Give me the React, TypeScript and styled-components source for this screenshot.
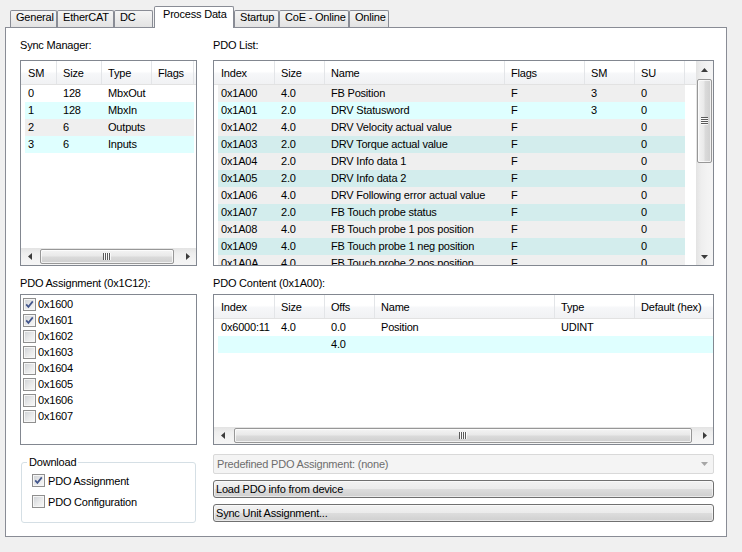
import React from "react";
import styled, { createGlobalStyle, css } from "styled-components";

const GlobalStyle = createGlobalStyle`
  * { box-sizing: border-box; }
  html, body { margin: 0; padding: 0; background: #f0f0f0; }
  body {
    width: 742px;
    height: 552px;
    overflow: hidden;
    font-family: "Liberation Sans", Arial, sans-serif;
    font-size: 11px;
    letter-spacing: -0.2px;
    color: #000;
  }
`;

const Window = styled.div`
  width: 742px;
  height: 552px;
  padding-top: 6px;
  background: #f0f0f0;
`;

const TabStrip = styled.div`
  display: flex;
  align-items: flex-end;
  height: 21px;
  padding-left: 10px;
`;

const Tab = styled.div<{ $active?: boolean; $w: number; $ml?: number }>`
  position: relative;
  flex: 0 0 ${(p) => p.$w}px;
  height: ${(p) => (p.$active ? 22 : 17)}px;
  margin-left: ${(p) => p.$ml ?? 0}px;
  margin-bottom: ${(p) => (p.$active ? -1 : 0)}px;
  z-index: ${(p) => (p.$active ? 1 : 0)};
  border: 1px solid #898c95;
  border-bottom: none;
  border-radius: 2px 2px 0 0;
  background: ${(p) =>
    p.$active ? "#ffffff" : "linear-gradient(#f5f5f5, #ececec 50%, #e3e3e3)"};
  padding: ${(p) => (p.$active ? "1px 0 0 8px" : "0 0 0 5px")};
  line-height: 13px;
  white-space: nowrap;
`;

const Panel = styled.div`
  margin-left: 5px;
  width: 722px;
  height: 510px;
  border: 1px solid #898c95;
  background: #ffffff;
  display: grid;
  grid-template-columns: 177px 501px;
  column-gap: 16px;
  align-items: start;
  padding: 11px 0 0 14px;
`;

const Column = styled.div`
  display: flex;
  flex-direction: column;
`;

const SectionLabel = styled.div<{ $mt?: number; $mb: number }>`
  height: 13px;
  line-height: 13px;
  margin-top: ${(p) => p.$mt ?? 0}px;
  margin-bottom: ${(p) => p.$mb}px;
  white-space: nowrap;
`;

const ListBox = styled.div<{ $h: number; $dir: "row" | "column" }>`
  height: ${(p) => p.$h}px;
  border: 1px solid #828790;
  background: #ffffff;
  display: flex;
  flex-direction: ${(p) => p.$dir};
  overflow: hidden;
`;

const ListArea = styled.div`
  flex: 1 1 auto;
  min-width: 0;
  min-height: 0;
  overflow: hidden;
`;

const HeaderRow = styled.div`
  display: flex;
  width: max-content;
  min-width: 100%;
  height: 24px;
  border-bottom: 1px solid #e2e2e2;
  background: linear-gradient(#ffffff 0%, #ffffff 45%, #f6f7f9 55%, #f1f2f4 100%);
`;

const HeaderCell = styled.div<{ $w: number; $first?: boolean }>`
  flex: 0 0 ${(p) => p.$w}px;
  padding: 1px 0 0 ${(p) => (p.$first ? 7 : 6)}px;
  border-right: 1px solid #e3e5e8;
  line-height: 22px;
  white-space: nowrap;
  overflow: hidden;
`;

const HeaderFill = styled.div`
  flex: 1 1 auto;
  min-width: 0;
`;

const DataRow = styled.div<{ $bg: string }>`
  display: flex;
  width: max-content;
  height: 17px;
  line-height: 17px;
  margin-left: 4px;
  background: ${(p) => p.$bg};
`;

const DataCell = styled.div<{ $w: number; $first?: boolean }>`
  flex: 0 0 ${(p) => (p.$first ? p.$w - 4 : p.$w)}px;
  padding-left: ${(p) => (p.$first ? 3 : 6)}px;
  white-space: nowrap;
  overflow: hidden;
`;

const HScroll = styled.div`
  flex: 0 0 17px;
  display: flex;
  background: linear-gradient(#e3e3e3, #eeeeee 30%, #f3f3f3 70%, #f5f5f5);
`;

const VScroll = styled.div`
  flex: 0 0 17px;
  display: flex;
  flex-direction: column;
  background: linear-gradient(90deg, #e3e3e3, #eeeeee 30%, #f3f3f3 70%, #f5f5f5);
`;

const ScrollBtn = styled.div`
  flex: 0 0 17px;
  display: flex;
  align-items: center;
  justify-content: center;
`;

const Track = styled.div<{ $dir: "row" | "column" }>`
  flex: 1 1 auto;
  min-width: 0;
  min-height: 0;
  display: flex;
  flex-direction: ${(p) => p.$dir};
`;

const Thumb = styled.div<{ $vertical?: boolean; $offset: number; $len: number }>`
  flex: 0 0 auto;
  display: flex;
  align-items: center;
  justify-content: center;
  border: 1px solid #979797;
  border-radius: 2px;
  box-shadow: inset 0 0 0 1px rgba(255, 255, 255, 0.7);
  ${(p) =>
    p.$vertical
      ? css`
          width: 15px;
          height: ${p.$len}px;
          margin: ${p.$offset}px 0 0 1px;
          background: linear-gradient(90deg, #f4f4f4, #e9e9e9 45%, #dadada 55%, #cfcfcf);
        `
      : css`
          height: 15px;
          width: ${p.$len}px;
          margin: 1px 0 0 ${p.$offset}px;
          background: linear-gradient(#f4f4f4, #e9e9e9 45%, #dadada 55%, #cfcfcf);
        `}
`;

const CheckList = styled.div`
  height: 151px;
  border: 1px solid #828790;
  background: #ffffff;
  padding: 1px 0 0 2px;
`;

const CheckRow = styled.div`
  display: flex;
  align-items: center;
  height: 16px;
  gap: 2px;
  white-space: nowrap;
`;

const CheckBox = styled.span`
  flex: 0 0 13px;
  width: 13px;
  height: 13px;
  border: 1px solid #8f8f8f;
  background: linear-gradient(135deg, #cdd0d4 0%, #e9eaeb 55%, #f9f9f9 100%);
  box-shadow: inset 0 0 0 1px #f6f6f6;
  display: flex;
  align-items: center;
  justify-content: center;
`;

const GroupBox = styled.fieldset`
  margin: 11px 1px 0;
  padding: 3px 0 12px;
  border: 1px solid #d5dfe5;
  border-radius: 3px;
  min-width: 0;
`;

const Legend = styled.legend`
  margin-left: 5px;
  padding: 0 2px;
  line-height: 13px;
`;

const OptionList = styled.div`
  display: flex;
  flex-direction: column;
  gap: 4px;
  padding-left: 10px;
`;

const OptionRow = styled.div`
  display: flex;
  align-items: center;
  height: 17px;
  gap: 3px;
  white-space: nowrap;
`;

const Combo = styled.div`
  margin-top: 9px;
  height: 20px;
  border: 1px solid #d9d9d9;
  border-radius: 2px;
  background: #f4f4f4;
  color: #6d6d6d;
  display: flex;
  align-items: center;
  padding-left: 3px;
`;

const ComboText = styled.span`
  flex: 1 1 auto;
  white-space: nowrap;
`;

const ComboArrow = styled.span`
  flex: 0 0 17px;
  display: flex;
  align-items: center;
  justify-content: center;
`;

const PushButton = styled.button<{ $mt: number }>`
  display: block;
  margin-top: ${(p) => p.$mt}px;
  width: 100%;
  height: 18px;
  border: 1px solid #707070;
  border-radius: 3px;
  background: linear-gradient(#f2f2f2 0%, #ebebeb 50%, #dddddd 51%, #cfcfcf 100%);
  box-shadow: inset 0 0 0 1px rgba(255, 255, 255, 0.55);
  font: inherit;
  letter-spacing: inherit;
  color: #000;
  text-align: left;
  padding: 0 0 0 2px;
  line-height: 16px;
  white-space: nowrap;
`;

type Dir = "up" | "down" | "left" | "right";

const Arrow = ({ dir, color = "#3c3c3c" }: { dir: Dir; color?: string }) => {
  const vert = dir === "up" || dir === "down";
  const pts = {
    up: "0,4 3.5,0 7,4",
    down: "0,0 7,0 3.5,4",
    left: "4,0 4,7 0,3.5",
    right: "0,0 4,3.5 0,7",
  }[dir];
  return (
    <svg width={vert ? 7 : 4} height={vert ? 4 : 7} viewBox={vert ? "0 0 7 4" : "0 0 4 7"}>
      <polygon points={pts} fill={color} />
    </svg>
  );
};

const Grip = ({ vertical }: { vertical?: boolean }) =>
  vertical ? (
    <svg width="7" height="8" viewBox="0 0 7 8">
      {[0, 2, 4, 6].map((y) => (
        <g key={y}>
          <rect x="0" y={y} width="7" height="1" fill="#5a5a5a" />
          <rect x="0" y={y + 1} width="7" height="1" fill="#ffffff" opacity="0.8" />
        </g>
      ))}
    </svg>
  ) : (
    <svg width="8" height="7" viewBox="0 0 8 7">
      {[0, 2, 4, 6].map((x) => (
        <g key={x}>
          <rect x={x} y="0" width="1" height="7" fill="#5a5a5a" />
          <rect x={x + 1} y="0" width="1" height="7" fill="#ffffff" opacity="0.8" />
        </g>
      ))}
    </svg>
  );

const HScrollBar = ({ offset, len }: { offset: number; len: number }) => (
  <HScroll>
    <ScrollBtn>
      <Arrow dir="left" />
    </ScrollBtn>
    <Track $dir="row">
      <Thumb $offset={offset} $len={len}>
        <Grip />
      </Thumb>
    </Track>
    <ScrollBtn>
      <Arrow dir="right" />
    </ScrollBtn>
  </HScroll>
);

const VScrollBar = ({ offset, len }: { offset: number; len: number }) => (
  <VScroll>
    <ScrollBtn>
      <Arrow dir="up" />
    </ScrollBtn>
    <Track $dir="column">
      <Thumb $vertical $offset={offset} $len={len}>
        <Grip vertical />
      </Thumb>
    </Track>
    <ScrollBtn>
      <Arrow dir="down" />
    </ScrollBtn>
  </VScroll>
);

const Check = ({ checked }: { checked?: boolean }) => (
  <CheckBox>
    {checked && (
      <svg width="11" height="11" viewBox="0 0 11 11">
        <path d="M2.2 5.4 L4.4 7.9 L8.8 2.4" fill="none" stroke="#43568c" strokeWidth="1.7" />
      </svg>
    )}
  </CheckBox>
);

type Col = { title: string; w: number };
type Row = { bg: string; cells: string[] };

const ListTable = ({ cols, rows }: { cols: Col[]; rows: Row[] }) => (
  <>
    <HeaderRow>
      {cols.map((c, i) => (
        <HeaderCell key={i} $w={c.w} $first={i === 0}>
          {c.title}
        </HeaderCell>
      ))}
      <HeaderFill />
    </HeaderRow>
    {rows.map((r, ri) => (
      <DataRow key={ri} $bg={r.bg}>
        {cols.map((c, i) => (
          <DataCell key={i} $w={c.w} $first={i === 0}>
            {r.cells[i] ?? ""}
          </DataCell>
        ))}
      </DataRow>
    ))}
  </>
);

const WHITE = "#ffffff";
const CYAN = "#dfffff";
const GRAY = "#efefef";
const TEAL = "#d3eded";

const tabs = [
  { t: "General", w: 47 },
  { t: "EtherCAT", w: 57 },
  { t: "DC", w: 39 },
  { t: "Process Data", w: 80, active: true, ml: 1 },
  { t: "Startup", w: 45 },
  { t: "CoE - Online", w: 70 },
  { t: "Online", w: 40 },
];

const syncCols: Col[] = [
  { title: "SM", w: 36 },
  { title: "Size", w: 45 },
  { title: "Type", w: 50 },
  { title: "Flags", w: 42 },
];

const syncRows: Row[] = [
  { bg: WHITE, cells: ["0", "128", "MbxOut", ""] },
  { bg: CYAN, cells: ["1", "128", "MbxIn", ""] },
  { bg: GRAY, cells: ["2", "6", "Outputs", ""] },
  { bg: CYAN, cells: ["3", "6", "Inputs", ""] },
];

const pdoCols: Col[] = [
  { title: "Index", w: 61 },
  { title: "Size", w: 50 },
  { title: "Name", w: 180 },
  { title: "Flags", w: 80 },
  { title: "SM", w: 50 },
  { title: "SU", w: 50 },
];

const pdoData: [string, string, string, string][] = [
  ["0x1A00", "4.0", "FB Position", "3"],
  ["0x1A01", "2.0", "DRV Statusword", "3"],
  ["0x1A02", "4.0", "DRV Velocity actual value", ""],
  ["0x1A03", "2.0", "DRV Torque actual value", ""],
  ["0x1A04", "2.0", "DRV Info data 1", ""],
  ["0x1A05", "2.0", "DRV Info data 2", ""],
  ["0x1A06", "4.0", "DRV Following error actual value", ""],
  ["0x1A07", "2.0", "FB Touch probe status", ""],
  ["0x1A08", "4.0", "FB Touch probe 1 pos position", ""],
  ["0x1A09", "4.0", "FB Touch probe 1 neg position", ""],
  ["0x1A0A", "4.0", "FB Touch probe 2 pos position", ""],
];

const pdoBgs = [GRAY, CYAN, GRAY, TEAL, GRAY, TEAL, GRAY, TEAL, GRAY, TEAL, GRAY];

const pdoRows: Row[] = pdoData.map((d, i) => ({
  bg: pdoBgs[i],
  cells: [d[0], d[1], d[2], "F", d[3], "0"],
}));

const contentCols: Col[] = [
  { title: "Index", w: 61 },
  { title: "Size", w: 50 },
  { title: "Offs", w: 50 },
  { title: "Name", w: 180 },
  { title: "Type", w: 80 },
  { title: "Default (hex)", w: 100 },
];

const contentRows: Row[] = [
  { bg: WHITE, cells: ["0x6000:11", "4.0", "0.0", "Position", "UDINT", ""] },
  { bg: CYAN, cells: ["", "", "4.0", "", "", ""] },
];

const assignments = [
  { id: "0x1600", on: true },
  { id: "0x1601", on: true },
  { id: "0x1602" },
  { id: "0x1603" },
  { id: "0x1604" },
  { id: "0x1605" },
  { id: "0x1606" },
  { id: "0x1607" },
];

export default function App() {
  return (
    <>
      <GlobalStyle />
      <Window>
        <TabStrip>
          {tabs.map((t) => (
            <Tab key={t.t} $w={t.w} $active={t.active} $ml={t.ml}>
              {t.t}
            </Tab>
          ))}
        </TabStrip>
        <Panel>
          <Column>
            <SectionLabel $mb={8}>Sync Manager:</SectionLabel>
            <ListBox $h={206} $dir="column">
              <ListArea>
                <ListTable cols={syncCols} rows={syncRows} />
              </ListArea>
              <HScrollBar offset={2} len={134} />
            </ListBox>
            <SectionLabel $mt={11} $mb={4}>
              PDO Assignment (0x1C12):
            </SectionLabel>
            <CheckList>
              {assignments.map((a) => (
                <CheckRow key={a.id}>
                  <Check checked={a.on} />
                  <span>{a.id}</span>
                </CheckRow>
              ))}
            </CheckList>
            <GroupBox>
              <Legend>Download</Legend>
              <OptionList>
                <OptionRow>
                  <Check checked />
                  <span>PDO Assignment</span>
                </OptionRow>
                <OptionRow>
                  <Check />
                  <span>PDO Configuration</span>
                </OptionRow>
              </OptionList>
            </GroupBox>
          </Column>
          <Column>
            <SectionLabel $mb={8}>PDO List:</SectionLabel>
            <ListBox $h={206} $dir="row">
              <ListArea>
                <ListTable cols={pdoCols} rows={pdoRows} />
              </ListArea>
              <VScrollBar offset={1} len={84} />
            </ListBox>
            <SectionLabel $mt={11} $mb={4}>
              PDO Content (0x1A00):
            </SectionLabel>
            <ListBox $h={151} $dir="column">
              <ListArea>
                <ListTable cols={contentCols} rows={contentRows} />
              </ListArea>
              <HScrollBar offset={3} len={458} />
            </ListBox>
            <Combo>
              <ComboText>Predefined PDO Assignment: (none)</ComboText>
              <ComboArrow>
                <Arrow dir="down" color="#a6a6a6" />
              </ComboArrow>
            </Combo>
            <PushButton $mt={6}>Load PDO info from device</PushButton>
            <PushButton $mt={6}>Sync Unit Assignment...</PushButton>
          </Column>
        </Panel>
      </Window>
    </>
  );
}
